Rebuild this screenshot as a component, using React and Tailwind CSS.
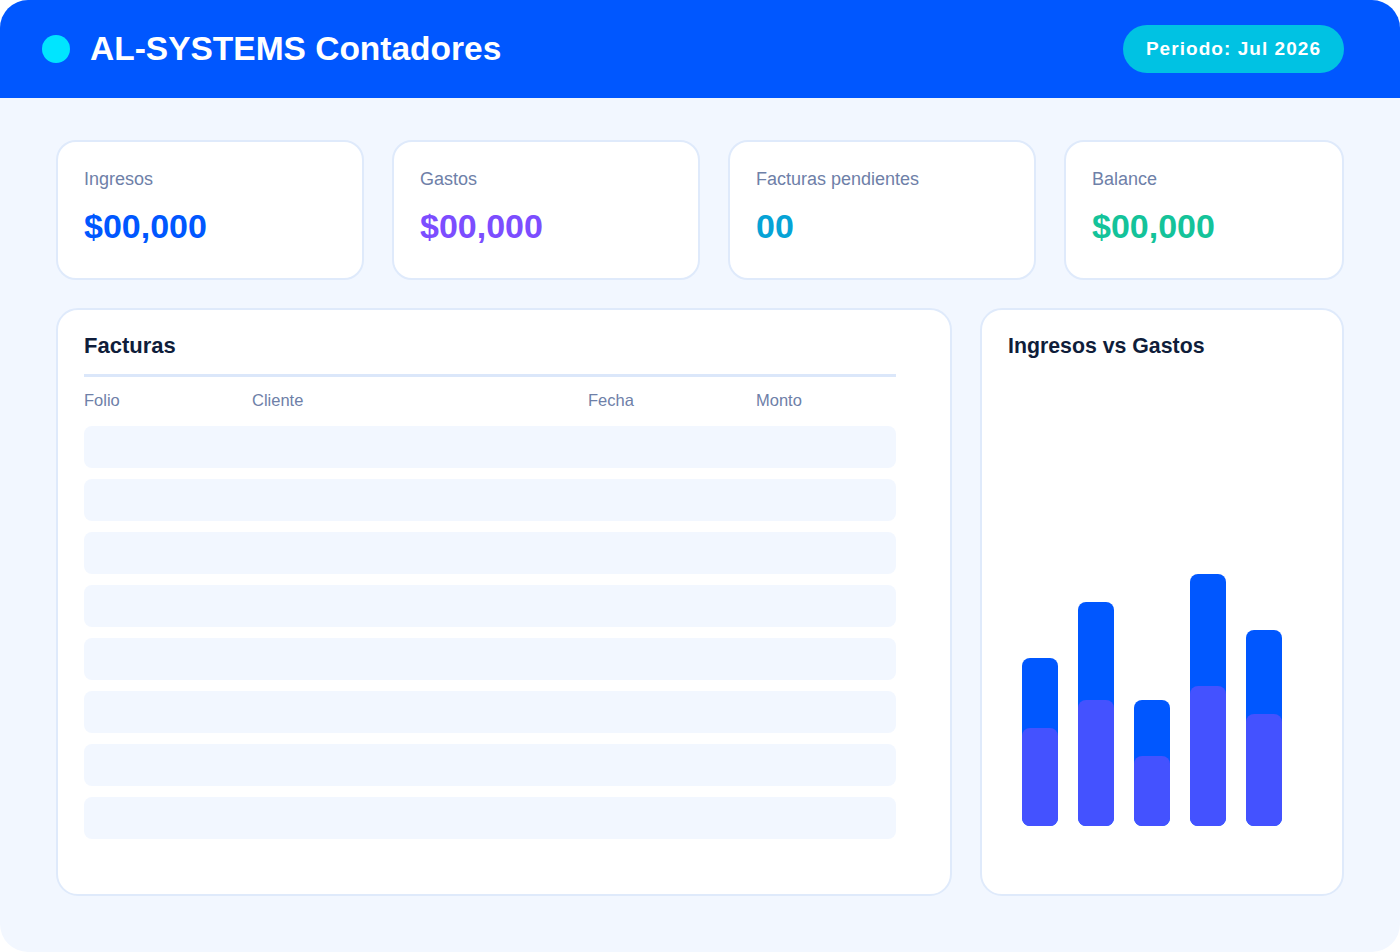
import React from "react";

const stats = [
  { label: "Ingresos", value: "$00,000", color: "text-[#0057FF]" },
  { label: "Gastos", value: "$00,000", color: "text-[#7C4DFF]" },
  { label: "Facturas pendientes", value: "00", color: "text-[#06A3D6]" },
  { label: "Balance", value: "$00,000", color: "text-[#14C39A]" },
];

const bars = [
  { total: 168, part: 98 },
  { total: 224, part: 126 },
  { total: 126, part: 70 },
  { total: 252, part: 140 },
  { total: 196, part: 112 },
];

export default function App() {
  return (
    <div className="w-[1400px] h-[952px] rounded-[28px] overflow-hidden bg-[#F2F7FF] flex flex-col" style={{ fontFamily: '"Liberation Sans", Arial, sans-serif' }}>
      <header className="h-[98px] shrink-0 bg-[#0057FF] flex items-center justify-between pl-[42px] pr-[56px]">
        <div className="flex items-center gap-[20px]">
          <div className="w-[28px] h-[28px] rounded-full bg-[#00E5FF]" />
          <h1 className="text-white font-bold text-[33.5px] leading-none">AL-SYSTEMS Contadores</h1>
        </div>
        <div className="h-[48px] px-[23px] rounded-full bg-[#00C2E3] flex items-center text-white font-bold text-[19px] tracking-[0.055em]">
          Periodo: Jul 2026
        </div>
      </header>

      <main className="flex-1 flex flex-col px-[56px] pt-[42px] pb-[56px] gap-[28px]">
        <div className="grid grid-cols-[308px_308px_308px_1fr] gap-[28px]">
          {stats.map((s) => (
            <div key={s.label} className="h-[140px] bg-white border-2 border-[#DFEAFB] rounded-[20px] px-[26px] pt-[26px]">
              <div className="text-[18px] leading-[22px] text-[#6E80A8]">{s.label}</div>
              <div className={`mt-[16px] text-[34px] leading-[40px] font-bold ${s.color}`}>{s.value}</div>
            </div>
          ))}
        </div>

        <div className="flex-1 flex gap-[28px]">
          <section className="w-[896px] bg-white border-2 border-[#DFEAFB] rounded-[22px] pl-[26px] pt-[23px]">
            <div className="w-[812px]">
              <h2 className="text-[22px] leading-[26px] font-bold text-[#0F1D3A]">Facturas</h2>
              <div className="mt-[15px] h-[3px] bg-[#DBE7FA]" />
              <div className="mt-[13px] grid grid-cols-[168px_336px_168px_1fr] text-[16.5px] leading-[20px] text-[#6E80A8]">
                <div>Folio</div>
                <div>Cliente</div>
                <div>Fecha</div>
                <div>Monto</div>
              </div>
              <div className="mt-[16px] flex flex-col gap-[11px]">
                {Array.from({ length: 8 }).map((_, i) => (
                  <div key={i} className="h-[42px] rounded-[8px] bg-[#F2F7FF]" />
                ))}
              </div>
            </div>
          </section>

          <section className="flex-1 bg-white border-2 border-[#DFEAFB] rounded-[22px] pl-[26px] pt-[23px] pb-[68px] flex flex-col">
            <h2 className="text-[21.3px] leading-[26px] font-bold text-[#0F1D3A]">Ingresos vs Gastos</h2>
            <div className="flex-1 flex items-end gap-[20px] pl-[14px]">
              {bars.map((b, i) => (
                <div key={i} className="w-[36px] rounded-[8px] bg-[#0057FF] flex flex-col justify-end" style={{ height: b.total }}>
                  <div className="w-full rounded-[8px] bg-[#4452FF]" style={{ height: b.part }} />
                </div>
              ))}
            </div>
          </section>
        </div>
      </main>
    </div>
  );
}
